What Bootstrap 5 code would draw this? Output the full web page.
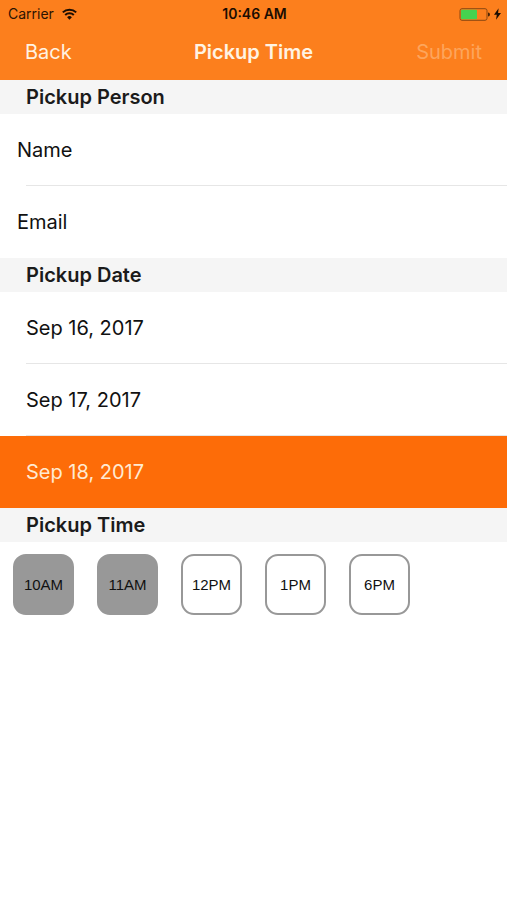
<!DOCTYPE html>
<html lang="en">
<head>
<meta charset="utf-8">
<meta name="viewport" content="width=device-width, initial-scale=1">
<title>Pickup Time</title>
<link href="https://cdn.jsdelivr.net/npm/bootstrap@5.3.0/dist/css/bootstrap.min.css" rel="stylesheet">
<style>
  body { font-family: Inter, "Liberation Sans", sans-serif; font-size: 20px; line-height: 24px; color: #111; background: #fff; }
  .app-header { background: #fc7f1d; }
  .status-bar { height: 28px; font-size: 14px; line-height: 28px; color: #2b1302; padding: 0 6px 0 8px; }
  .status-bar .clock { color: #1a0d02; }
  .side { flex: 1 1 0; }
  .title-bar { height: 52px; padding: 0 25px 4px; color: #fff3e3; }
  .title-bar h1 { font-size: 20px; line-height: 24px; font-weight: 600; }
  .bar-btn { color: #fff3e3; font-size: 20px; line-height: 24px; }
  .bar-btn:disabled { color: #fda55c; }
  .section-title { height: 34px; padding: 0 26px; font-size: 20px; line-height: 35px; font-weight: 600; background: #f5f5f5; color: #1b1b1b; }
  .entry { height: 72px; }
  .entry:not(:last-child) { background: linear-gradient(#e6e6e6, #e6e6e6) 26px 100% / 100% 1px no-repeat; }
  .entry input { padding: 0 17px; font-size: 20px; color: #111; }
  .entry input::placeholder { color: #111; opacity: 1; }
  .date-btn { padding: 0 26px; font-size: 20px; line-height: 24px; color: #111; }
  .entry.chosen { background: #fd6c08; }
  .chosen .date-btn { color: #ffead2; }
  .slots { padding: 12px 13px; gap: 23px; }
  .slot { width: 61px; height: 61px; border: 2px solid #989898; border-radius: 13px; background: #fff; color: #111; font: 15px/20px "Liberation Sans", Arial, sans-serif; }
  .slot:disabled { background: #989898; }
</style>
<script src="https://cdn.jsdelivr.net/npm/bootstrap@5.3.0/dist/js/bootstrap.bundle.min.js" defer></script>
</head>
<body>
<header class="app-header">
  <div class="status-bar d-flex align-items-center">
    <div class="side d-flex align-items-center gap-2">
      <span>Carrier</span>
      <svg width="15" height="12" viewBox="0 0 15 12" fill="none" stroke="#1a0d02" stroke-width="2" aria-label="Wi-Fi" role="img">
        <path d="M.8 4.4a9.6 9.6 0 0 1 13.4 0M3.2 7a6.1 6.1 0 0 1 8.6 0"/>
        <path d="M7.5 11.7 5.1 9.2a3.4 3.4 0 0 1 4.8 0z" fill="#1a0d02" stroke="none"/>
      </svg>
    </div>
    <span class="clock fw-semibold">10:46 AM</span>
    <div class="side d-flex align-items-center justify-content-end gap-1">
      <svg width="31" height="13" viewBox="0 0 31 13" role="img" aria-label="Battery charging">
        <rect x="1" y=".7" width="27" height="11.6" rx="2" fill="none" stroke="#8a4812"/>
        <rect x="2" y="1.7" width="16" height="9.6" rx="1" fill="#45d34f"/>
        <path d="M29 4.5a2 2 0 0 1 0 4z" fill="#4a2405"/>
      </svg>
      <svg width="7" height="12" viewBox="0 0 7 12" aria-hidden="true"><path d="M4.6.3 0 6.8h2.8L2 11.7 7 5H4.1z" fill="#1a0d02"/></svg>
    </div>
  </div>
  <nav class="title-bar d-flex align-items-center" aria-label="Pickup">
    <div class="side d-flex"><button type="button" class="btn bar-btn border-0 p-0">Back</button></div>
    <h1 class="m-0">Pickup Time</h1>
    <div class="side d-flex justify-content-end"><button type="button" class="btn bar-btn border-0 p-0 opacity-100" disabled>Submit</button></div>
  </nav>
</header>
<main>
  <section>
    <h2 class="section-title m-0">Pickup Person</h2>
    <div class="entry d-flex"><input class="w-100 border-0 bg-transparent" type="text" placeholder="Name" aria-label="Name"></div>
    <div class="entry d-flex"><input class="w-100 border-0 bg-transparent" type="email" placeholder="Email" aria-label="Email"></div>
  </section>
  <section>
    <h2 class="section-title m-0">Pickup Date</h2>
    <div class="entry d-flex"><button type="button" class="date-btn w-100 border-0 bg-transparent text-start">Sep 16, 2017</button></div>
    <div class="entry d-flex"><button type="button" class="date-btn w-100 border-0 bg-transparent text-start">Sep 17, 2017</button></div>
    <div class="entry d-flex chosen"><button type="button" class="date-btn w-100 border-0 bg-transparent text-start" aria-pressed="true">Sep 18, 2017</button></div>
  </section>
  <section>
    <h2 class="section-title m-0">Pickup Time</h2>
    <div class="slots d-flex flex-wrap">
      <button type="button" class="slot p-0" disabled>10AM</button>
      <button type="button" class="slot p-0" disabled>11AM</button>
      <button type="button" class="slot p-0">12PM</button>
      <button type="button" class="slot p-0">1PM</button>
      <button type="button" class="slot p-0">6PM</button>
    </div>
  </section>
</main>
</body>
</html>
